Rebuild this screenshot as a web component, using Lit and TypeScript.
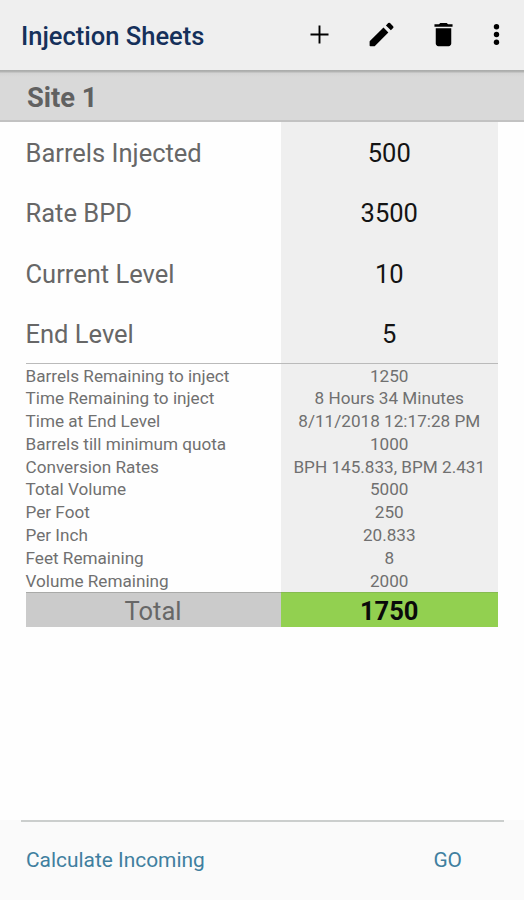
import { LitElement, html, css } from "lit";
import { customElement } from "lit/decorators.js";

const readings = [
  ["Barrels Injected", "500"],
  ["Rate BPD", "3500"],
  ["Current Level", "10"],
  ["End Level", "5"],
];

const results = [
  ["Barrels Remaining to inject", "1250"],
  ["Time Remaining to inject", "8 Hours 34 Minutes"],
  ["Time at End Level", "8/11/2018 12:17:28 PM"],
  ["Barrels till minimum quota", "1000"],
  ["Conversion Rates", "BPH 145.833, BPM 2.431"],
  ["Total Volume", "5000"],
  ["Per Foot", "250"],
  ["Per Inch", "20.833"],
  ["Feet Remaining", "8"],
  ["Volume Remaining", "2000"],
];

@customElement("app-root")
export class AppRoot extends LitElement {
  static styles = css`
    :host {
      display: flex;
      flex-direction: column;
      height: 900px;
      background: #fefefe;
      font-family: Roboto, sans-serif;
      color: #676767;
      overflow: hidden;
    }
    * {
      box-sizing: border-box;
    }
    .toolbar {
      flex: none;
      height: 70px;
      display: flex;
      align-items: center;
      padding: 0 0 0 21px;
      background: #efefef;
    }
    .title {
      flex: 1;
      font-size: 25.5px;
      font-weight: 500;
      line-height: 30px;
      padding-top: 2px;
      color: #15305a;
      white-space: nowrap;
    }
    .icons {
      display: grid;
      grid-template-columns: 62px 62px 62px 45px;
      justify-items: center;
      align-items: center;
      margin: 0 5px 1px 0;
    }
    svg {
      display: block;
      width: 31px;
      height: 31px;
    }
    .site {
      flex: none;
      height: 52px;
      padding-left: 27px;
      background: linear-gradient(#a9abaa, #b5b6b5 2px, #d3d3d3 3px, #d9d9d9 7px);
      border-bottom: 2px solid #c2c2c2;
      font-size: 27.3px;
      font-weight: 700;
      line-height: 56px;
      color: #616161;
    }
    .table {
      flex: none;
      margin: 0 26px 0 25.5px;
    }
    .row {
      display: grid;
      grid-template-columns: 255px 1fr;
    }
    .value {
      text-align: center;
      white-space: nowrap;
    }
    .readings,
    .results {
      background: linear-gradient(90deg, transparent 255px, #efefef 255px);
    }
    .readings .row {
      height: 60.25px;
      line-height: 62px;
      font-size: 25.5px;
    }
    .readings .value {
      color: #141414;
    }
    .results {
      border-top: 1px solid #bababa;
      padding-top: 0.5px;
      color: #707070;
    }
    .results .row {
      height: 22.8px;
      line-height: 23.4px;
      font-size: 17.15px;
    }
    .total {
      height: 35px;
      line-height: 37px;
      font-size: 25.5px;
      text-align: center;
    }
    .total div {
      height: 35px;
      border-top: 1px solid #a9aaa8;
      background: #cbcbcb;
    }
    .total .value {
      border-top-color: #86bb50;
      background: #92d050;
      color: #0a0a0a;
      font-weight: 700;
    }
    .spacer {
      flex: 1;
    }
    .footer {
      flex: none;
      height: 80px;
      background: #fafafa;
    }
    .rule {
      height: 2px;
      margin: 0 20px 0 21px;
      background: #cbcecd;
    }
    .actions {
      display: flex;
      justify-content: space-between;
      padding: 0 62px 0 26px;
      line-height: 77px;
      font-size: 20.9px;
      color: #407f9f;
    }
  `;

  render() {
    const row = ([label, value]: string[]) => html`
      <div class="row"><div>${label}</div><div class="value">${value}</div></div>
    `;
    return html`
      <div class="toolbar">
        <div class="title">Injection Sheets</div>
        <div class="icons">
          <svg viewBox="0 0 31 31"><path d="M15.5 6.5v18M6.5 15.5h18" stroke="#000" stroke-width="1.9" /></svg>
          <svg viewBox="0 0 24 24"><path d="M2.8 17.6V20.500q0 .6.600.6H6.400q.3 0 .5-.2L17.300 10.400l-3.750-3.750L3 17q-.2.2-.2.600zM21 7a1 1 0 0 0 0-1.410l-2.400-2.400a1 1 0 0 0-1.410 0l-1.750 1.750 3.800 3.800z" /></svg>
          <svg viewBox="0 0 24 24"><path d="M6 19c0 1.100.9 2 2 2h8c1.100 0 2-.9 2-2V7.200H6zM19 4h-3.500l-1-1h-5l-1 1H5v2h14z" /></svg>
          <svg viewBox="0 0 31 31"><circle cx="15.500" cy="7.700" r="2.700" /><circle cx="15.500" cy="15.500" r="2.700" /><circle cx="15.500" cy="23.300" r="2.700" /></svg>
        </div>
      </div>
      <div class="site">Site 1</div>
      <div class="table">
        <div class="readings">${readings.map(row)}</div>
        <div class="results">${results.map(row)}</div>
        <div class="row total"><div>Total</div><div class="value">1750</div></div>
      </div>
      <div class="spacer"></div>
      <div class="footer">
        <div class="rule"></div>
        <div class="actions"><span>Calculate Incoming</span><span>GO</span></div>
      </div>
    `;
  }
}
